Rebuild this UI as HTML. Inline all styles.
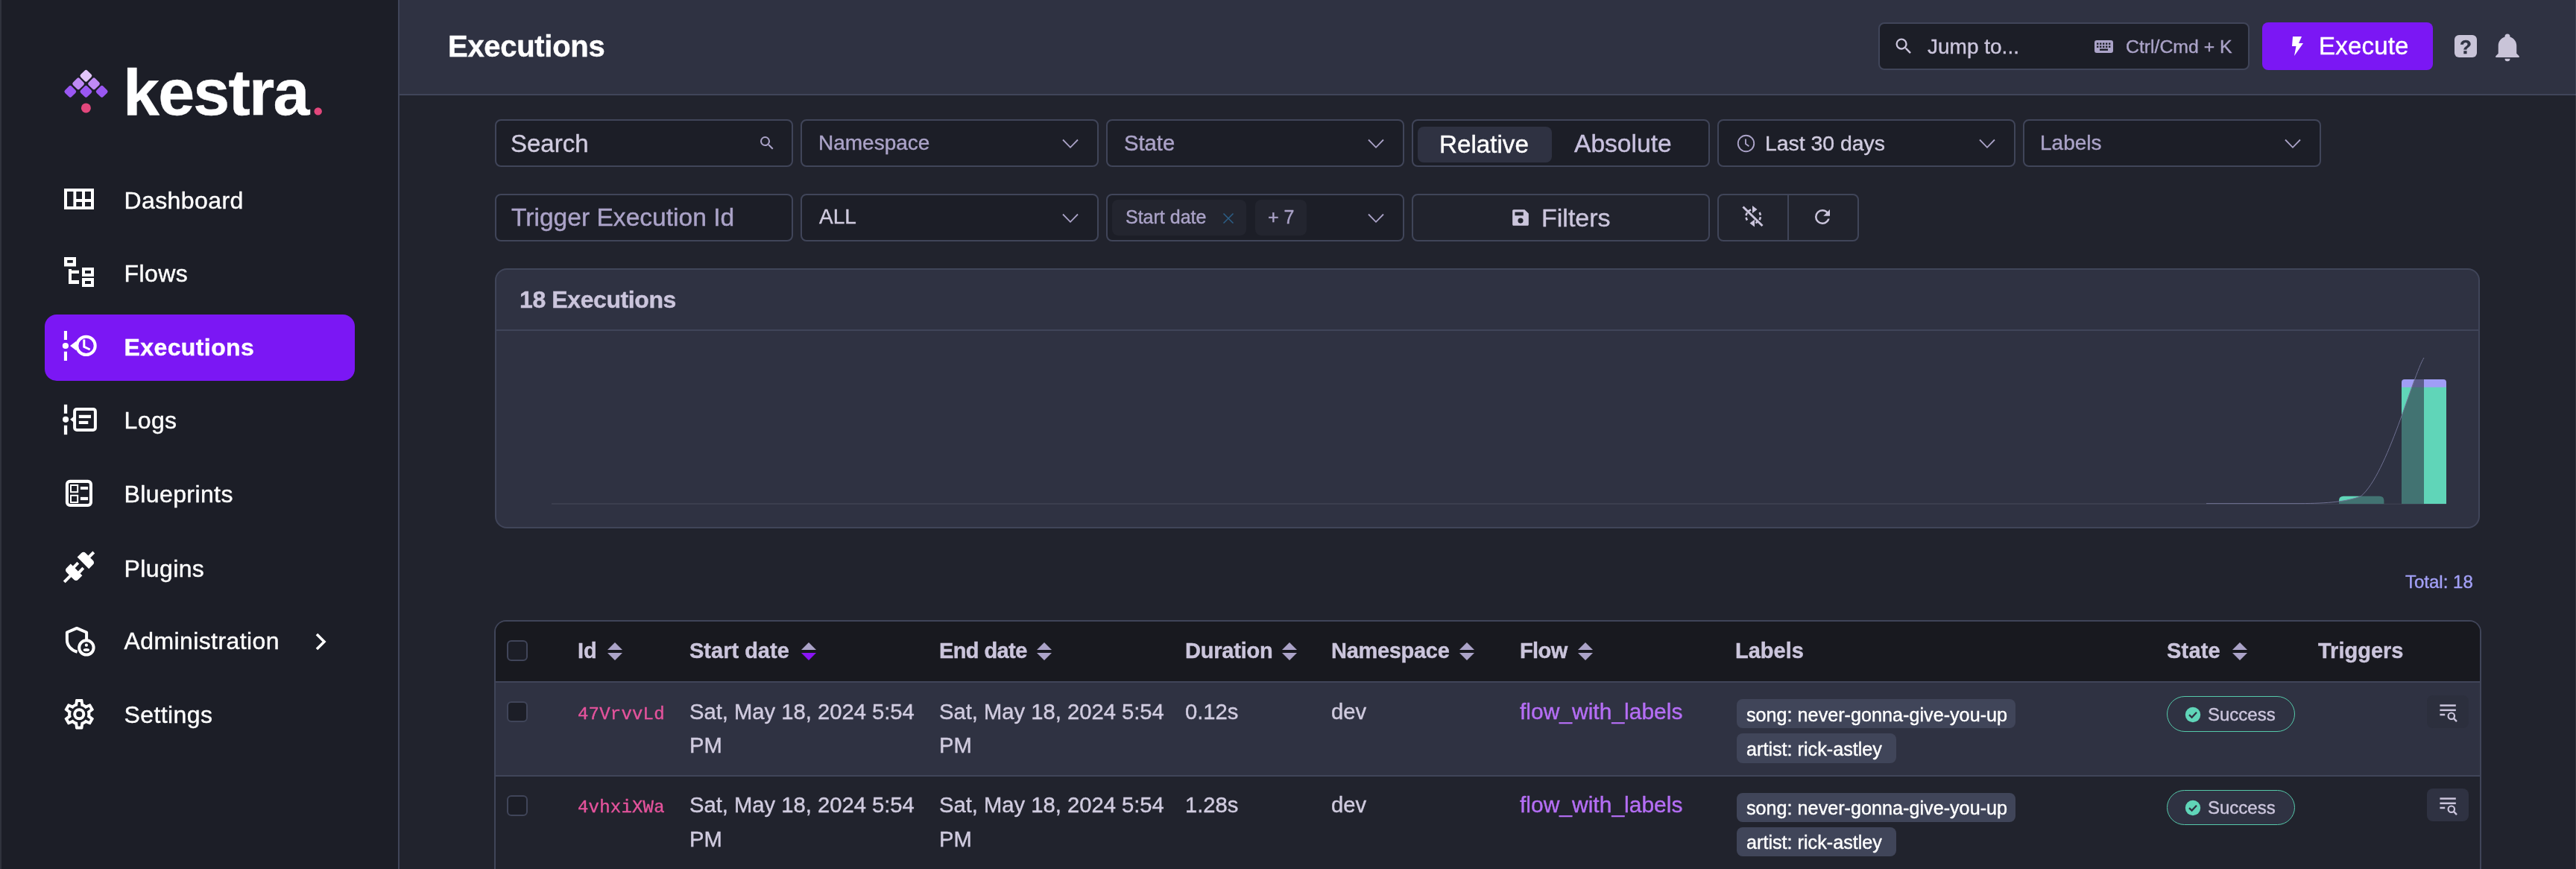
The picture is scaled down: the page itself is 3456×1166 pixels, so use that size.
<!DOCTYPE html>
<html><head><meta charset="utf-8"><title>Executions | Kestra</title>
<style>
html,body{margin:0;padding:0;}
@media (min-width:2400px){html{zoom:2;}}
body{width:1728px;height:583px;overflow:hidden;position:relative;background:#21232d;font-family:'Liberation Sans',sans-serif;}
.t{position:absolute;line-height:1;white-space:nowrap;-webkit-text-stroke:0.2px currentColor;}
.b{position:absolute;}
svg.b{overflow:visible;}
</style></head><body>
<div id="root" style="position:absolute;left:0;top:0;width:1728px;height:583px;will-change:transform">
<div class="b" style="left:0.00px;top:0.00px;width:267.00px;height:583.00px;background:#1c1e27"></div>
<div class="b" style="left:267.00px;top:0.00px;width:1.00px;height:583.00px;background:#404559"></div>
<svg class="b" style="left:0.00px;top:0.00px;width:267.00px;height:100.00px;" viewBox="0 0 534 200"><rect x="109.10000000000001" y="95.4" width="12.6" height="12.6" rx="2.6" fill="#e3c6fb" transform="rotate(45 115.4 101.7)"/><rect x="98.8" y="106.0" width="12.6" height="12.6" rx="2.6" fill="#bf8af5" transform="rotate(45 105.1 112.3)"/><rect x="119.7" y="106.0" width="12.6" height="12.6" rx="2.6" fill="#bf8af5" transform="rotate(45 126 112.3)"/><rect x="88.0" y="116.5" width="12.6" height="12.6" rx="2.6" fill="#9a57f2" transform="rotate(45 94.3 122.8)"/><rect x="109.10000000000001" y="116.5" width="12.6" height="12.6" rx="2.6" fill="#9a57f2" transform="rotate(45 115.4 122.8)"/><rect x="130.39999999999998" y="116.5" width="12.6" height="12.6" rx="2.6" fill="#9a57f2" transform="rotate(45 136.7 122.8)"/><circle cx="115.4" cy="144.9" r="6.5" fill="#e2477c"/><circle cx="426.7" cy="149.4" r="5.2" fill="#e2477c"/></svg>
<div class="t" style="left:82.50px;top:40.00px;font-size:44px;color:#ffffff;font-weight:700;font-family:'Liberation Sans',sans-serif;letter-spacing:-0.9px;">kestra</div>
<div class="b" style="left:30.00px;top:211.00px;width:208.00px;height:44.25px;background:#7b17f4;border-radius:8px"></div>
<div class="t" style="left:83.25px;top:126.45px;font-size:16px;color:#ffffff;font-weight:400;font-family:'Liberation Sans',sans-serif;letter-spacing:0.2px;">Dashboard</div>
<div class="t" style="left:83.25px;top:175.60px;font-size:16px;color:#ffffff;font-weight:400;font-family:'Liberation Sans',sans-serif;letter-spacing:0.2px;">Flows</div>
<div class="t" style="left:83.25px;top:224.90px;font-size:16px;color:#ffffff;font-weight:700;font-family:'Liberation Sans',sans-serif;letter-spacing:0.2px;">Executions</div>
<div class="t" style="left:83.25px;top:274.20px;font-size:16px;color:#ffffff;font-weight:400;font-family:'Liberation Sans',sans-serif;letter-spacing:0.2px;">Logs</div>
<div class="t" style="left:83.25px;top:323.50px;font-size:16px;color:#ffffff;font-weight:400;font-family:'Liberation Sans',sans-serif;letter-spacing:0.2px;">Blueprints</div>
<div class="t" style="left:83.25px;top:373.35px;font-size:16px;color:#ffffff;font-weight:400;font-family:'Liberation Sans',sans-serif;letter-spacing:0.2px;">Plugins</div>
<div class="t" style="left:83.25px;top:422.20px;font-size:16px;color:#ffffff;font-weight:400;font-family:'Liberation Sans',sans-serif;letter-spacing:0.2px;">Administration</div>
<div class="t" style="left:83.25px;top:471.65px;font-size:16px;color:#ffffff;font-weight:400;font-family:'Liberation Sans',sans-serif;letter-spacing:0.2px;">Settings</div>
<svg class="b" style="left:210.00px;top:424.00px;width:11.00px;height:13.00px;" viewBox="0 0 22 26"><path d="M5 3 L15 13 L5 23" fill="none" stroke="#fff" stroke-width="3.6"/></svg>
<svg class="b" style="left:43.00px;top:126.45px;width:20.00px;height:14.05px;" viewBox="0 0 40 28"><path fill-rule="evenodd" fill="#ffffff" d="M0 0H40V28H0Z M4 4H12.4V24H4Z M16.3 4H24V14H16.3Z M16.3 18H24V24H16.3Z M28 4H36V14H28Z M28 18H36V24H28Z"/></svg>
<svg class="b" style="left:43.00px;top:172.50px;width:20.00px;height:20.00px;" viewBox="0 0 40 40"><path fill-rule="evenodd" fill="#ffffff" d="M0 0H16V12.4H0Z M4.2 4H11.8V7.8H4.2Z M24 14H40V26H24Z M28 18H36V22H28Z M24 28H40V40H24Z M28 32H36V36H28Z"/><path fill="#ffffff" d="M6 16H10V17.8H20V21.9H10V31H20V36H6Z"/></svg>
<svg class="b" style="left:40.00px;top:220.00px;width:25.00px;height:25.00px;" viewBox="0 0 50 50"><rect x="5.9" y="4" width="4.1" height="12" fill="#ffffff"/><circle cx="7.9" cy="24" r="4.1" fill="#ffffff"/><rect x="5.9" y="31.7" width="4.1" height="12.3" fill="#ffffff"/><path d="M14 24 L19.5 19.5 A14 14 0 1 1 19.5 28.5 Z" fill="none" stroke="#ffffff" stroke-width="0"/><circle cx="35.5" cy="23.9" r="12.2" fill="none" stroke="#ffffff" stroke-width="4"/><path d="M14 24 L22.5 17.5 L22.5 30.5Z" fill="#ffffff"/><path d="M32.8 15.6 V25.3 L40.7 29" fill="none" stroke="#ffffff" stroke-width="3"/></svg>
<svg class="b" style="left:40.00px;top:270.00px;width:26.00px;height:23.00px;" viewBox="0 0 52 46"><rect x="5.9" y="2.8" width="4.3" height="12.1" fill="#ffffff"/><circle cx="8.1" cy="22.8" r="4.1" fill="#ffffff"/><rect x="5.9" y="30.7" width="4.3" height="12.5" fill="#ffffff"/><rect x="20.1" y="8.9" width="27.8" height="28" rx="3" fill="none" stroke="#ffffff" stroke-width="4"/><path d="M14.1 22.8 L20.5 17.5 L20.5 28.1Z" fill="#ffffff"/><rect x="25.8" y="16.8" width="16.2" height="4.3" fill="#ffffff"/><rect x="25.8" y="24.9" width="12.5" height="4.1" fill="#ffffff"/></svg>
<svg class="b" style="left:40.00px;top:320.00px;width:25.00px;height:23.00px;" viewBox="0 0 50 46"><rect x="9.95" y="5.85" width="32" height="32.2" rx="4" fill="none" stroke="#ffffff" stroke-width="4.1"/><rect x="15" y="11" width="9.2" height="9.2" fill="none" stroke="#ffffff" stroke-width="2"/><rect x="15" y="24.8" width="9.2" height="9.2" fill="none" stroke="#ffffff" stroke-width="2"/><rect x="27.9" y="13" width="10.2" height="3.9" fill="#ffffff"/><rect x="27.9" y="26.9" width="10.2" height="4.2" fill="#ffffff"/></svg>
<svg class="b" style="left:40.90px;top:368.30px;width:24.00px;height:24.00px;" viewBox="0 0 24 24"><path fill="#ffffff" d="M21.4 7.5C22.2 8.3 22.2 9.6 21.4 10.3L18.6 13.1L10.8 5.3L13.6 2.5C14.4 1.7 15.7 1.7 16.4 2.5L18.2 4.3L21.2 1.3L22.6 2.7L19.6 5.7L21.4 7.5M15.6 13.3L14.2 11.9L11.4 14.7L9.3 12.6L12.1 9.8L10.7 8.4L7.9 11.2L6.4 9.8L3.6 12.6C2.8 13.4 2.8 14.7 3.6 15.4L5.4 17.2L1.4 21.2L2.8 22.6L6.8 18.6L8.6 20.4C9.4 21.2 10.7 21.2 11.4 20.4L14.2 17.6L12.8 16.2L15.6 13.3Z"/></svg>
<svg class="b" style="left:40.00px;top:417.50px;width:25.00px;height:25.00px;" viewBox="0 0 50 50"><path d="M36.1 24 V13.5 L23 7.9 L9.9 13.5 V23.5 C9.9 31 15 37.5 23.6 39.7" fill="none" stroke="#ffffff" stroke-width="4" stroke-linejoin="round"/><circle cx="35.9" cy="33.9" r="9.7" fill="#1c1e27" stroke="#ffffff" stroke-width="4"/><circle cx="35.9" cy="30.7" r="2.1" fill="#ffffff"/><ellipse cx="35.9" cy="37" rx="4.2" ry="2.1" fill="#ffffff"/></svg>
<svg class="b" style="left:40.95px;top:466.90px;width:24.25px;height:24.25px;" viewBox="0 0 24 24"><path fill="#ffffff" d="M12,8A4,4 0 0,1 16,12A4,4 0 0,1 12,16A4,4 0 0,1 8,12A4,4 0 0,1 12,8M12,10A2,2 0 0,0 10,12A2,2 0 0,0 12,14A2,2 0 0,0 14,12A2,2 0 0,0 12,10M10,22C9.75,22 9.54,21.82 9.5,21.58L9.13,18.93C8.5,18.68 7.96,18.34 7.44,17.94L4.95,18.95C4.73,19.03 4.46,18.95 4.34,18.73L2.34,15.27C2.21,15.05 2.27,14.78 2.46,14.63L4.57,12.97L4.5,12L4.57,11L2.46,9.37C2.27,9.22 2.21,8.95 2.34,8.73L4.34,5.27C4.46,5.05 4.73,4.96 4.95,5.05L7.44,6.05C7.96,5.66 8.5,5.32 9.13,5.07L9.5,2.42C9.54,2.18 9.75,2 10,2H14C14.25,2 14.46,2.18 14.5,2.42L14.87,5.07C15.5,5.32 16.04,5.66 16.56,6.05L19.05,5.05C19.27,4.96 19.54,5.05 19.66,5.27L21.66,8.73C21.79,8.95 21.73,9.22 21.54,9.37L19.43,11L19.5,12L19.43,13L21.54,14.63C21.73,14.78 21.79,15.05 21.66,15.27L19.66,18.73C19.54,18.95 19.27,19.04 19.05,18.95L16.56,17.95C16.04,18.34 15.5,18.68 14.87,18.93L14.5,21.58C14.46,21.82 14.25,22 14,22H10M11.25,4L10.88,6.61C9.68,6.86 8.62,7.5 7.85,8.39L5.44,7.35L4.69,8.65L6.8,10.2C6.4,11.37 6.4,12.64 6.8,13.8L4.68,15.36L5.43,16.66L7.86,15.62C8.63,16.5 9.68,17.14 10.87,17.38L11.24,20H12.76L13.13,17.39C14.32,17.14 15.37,16.5 16.14,15.62L18.57,16.66L19.32,15.36L17.2,13.81C17.6,12.64 17.6,11.37 17.2,10.2L19.31,8.65L18.56,7.35L16.15,8.39C15.38,7.5 14.32,6.86 13.12,6.62L12.75,4H11.25Z"/></svg>
<div class="b" style="left:0.00px;top:0.00px;width:0.75px;height:583.00px;background:#30333d"></div>
<div class="b" style="left:268.00px;top:0.00px;width:1460.00px;height:63.00px;background:#2f3242"></div>
<div class="b" style="left:268.00px;top:63.00px;width:1460.00px;height:1.00px;background:#404559"></div>
<div class="t" style="left:300.50px;top:21.12px;font-size:20px;color:#ffffff;font-weight:700;font-family:'Liberation Sans',sans-serif;letter-spacing:-0.15px;">Executions</div>
<div class="b" style="left:1260.00px;top:15.00px;width:249.00px;height:31.75px;background:#1c1e27;border:1px solid #404559;border-radius:4px;box-sizing:border-box"></div>
<svg class="b" style="left:1270.00px;top:24.00px;width:14.00px;height:14.00px;" viewBox="0 0 24 24"><path fill="#cbc5dc" d="M9.5,3A6.5,6.5 0 0,1 16,9.5C16,11.11 15.41,12.59 14.44,13.73L14.71,14H15.5L20.5,19L19,20.5L14,15.5V14.71L13.73,14.44C12.59,15.41 11.11,16 9.5,16A6.5,6.5 0 0,1 3,9.5A6.5,6.5 0 0,1 9.5,3M9.5,5C7,5 5,7 5,9.5C5,12 7,14 9.5,14C12,14 14,12 14,9.5C14,7 12,5 9.5,5Z"/></svg>
<div class="t" style="left:1293.00px;top:24.25px;font-size:14px;color:#cbc5dc;font-weight:400;font-family:'Liberation Sans',sans-serif;letter-spacing:0px;">Jump to...</div>
<svg class="b" style="left:1405.00px;top:26.75px;width:12.50px;height:8.50px;" viewBox="0 0 25 17"><rect x="0" y="0" width="25" height="17" rx="3" fill="#aba3c8"/><rect x="3" y="3.5" width="2.4" height="2.4" fill="#1c1e27"/><rect x="3" y="7.5" width="2.4" height="2.4" fill="#1c1e27"/><rect x="7" y="3.5" width="2.4" height="2.4" fill="#1c1e27"/><rect x="7" y="7.5" width="2.4" height="2.4" fill="#1c1e27"/><rect x="11" y="3.5" width="2.4" height="2.4" fill="#1c1e27"/><rect x="11" y="7.5" width="2.4" height="2.4" fill="#1c1e27"/><rect x="15" y="3.5" width="2.4" height="2.4" fill="#1c1e27"/><rect x="15" y="7.5" width="2.4" height="2.4" fill="#1c1e27"/><rect x="19" y="3.5" width="2.4" height="2.4" fill="#1c1e27"/><rect x="19" y="7.5" width="2.4" height="2.4" fill="#1c1e27"/><rect x="7" y="11.5" width="11" height="2.4" fill="#1c1e27"/></svg>
<div class="t" style="left:1426.00px;top:25.25px;font-size:12.4px;color:#aba3c8;font-weight:400;font-family:'Liberation Sans',sans-serif;letter-spacing:0px;">Ctrl/Cmd + K</div>
<div class="b" style="left:1517.50px;top:15.00px;width:114.50px;height:32.00px;background:#7b17f4;border-radius:4px"></div>
<svg class="b" style="left:1536.50px;top:24.00px;width:10.00px;height:14.00px;" viewBox="0 0 20 28"><path fill="#fff" d="M3 1 H15 L11 10 H17 L5 27 L7.5 14 H2 Z"/></svg>
<div class="t" style="left:1555.50px;top:22.43px;font-size:16.5px;color:#ffffff;font-weight:400;font-family:'Liberation Sans',sans-serif;letter-spacing:0.1px;">Execute</div>
<div class="b" style="left:1646.50px;top:23.35px;width:15.00px;height:15.20px;background:#c9c4d8;border-radius:3px"></div>
<div class="t" style="left:1649.00px;top:25.24px;font-size:13px;color:#2f3242;font-weight:700;font-family:'Liberation Sans',sans-serif;letter-spacing:0px;width:10px;text-align:center;">?</div>
<svg class="b" style="left:1671.50px;top:21.00px;width:21.00px;height:21.00px;" viewBox="0 0 24 24"><path fill="#c9c4d8" d="M21,19V20H3V19L5,17V11C5,7.9 7.03,5.17 10,4.29C10,4.19 10,4.1 10,4A2,2 0 0,1 12,2A2,2 0 0,1 14,4C14,4.1 14,4.19 14,4.29C16.97,5.17 19,7.9 19,11V17L21,19M14,21A2,2 0 0,1 12,23A2,2 0 0,1 10,21"/></svg>
<div class="b" style="left:332.00px;top:80.00px;width:199.75px;height:32.00px;background:#1c1e27;border:1px solid #404559;border-radius:4px;box-sizing:border-box"></div>
<div class="b" style="left:537.00px;top:80.00px;width:199.75px;height:32.00px;background:#1c1e27;border:1px solid #404559;border-radius:4px;box-sizing:border-box"></div>
<div class="b" style="left:742.00px;top:80.00px;width:199.75px;height:32.00px;background:#1c1e27;border:1px solid #404559;border-radius:4px;box-sizing:border-box"></div>
<div class="b" style="left:947.00px;top:80.00px;width:199.75px;height:32.00px;background:#1c1e27;border:1px solid #404559;border-radius:4px;box-sizing:border-box"></div>
<div class="b" style="left:1152.00px;top:80.00px;width:199.75px;height:32.00px;background:#1c1e27;border:1px solid #404559;border-radius:4px;box-sizing:border-box"></div>
<div class="b" style="left:1357.00px;top:80.00px;width:199.75px;height:32.00px;background:#1c1e27;border:1px solid #404559;border-radius:4px;box-sizing:border-box"></div>
<div class="t" style="left:342.50px;top:87.78px;font-size:16.5px;color:#d0cbdf;font-weight:400;font-family:'Liberation Sans',sans-serif;letter-spacing:0px;">Search</div>
<svg class="b" style="left:508.50px;top:90.00px;width:12.00px;height:12.00px;" viewBox="0 0 24 24"><path fill="#aba3c8" d="M9.5,3A6.5,6.5 0 0,1 16,9.5C16,11.11 15.41,12.59 14.44,13.73L14.71,14H15.5L20.5,19L19,20.5L14,15.5V14.71L13.73,14.44C12.59,15.41 11.11,16 9.5,16A6.5,6.5 0 0,1 3,9.5A6.5,6.5 0 0,1 9.5,3M9.5,5C7,5 5,7 5,9.5C5,12 7,14 9.5,14C12,14 14,12 14,9.5C14,7 12,5 9.5,5Z"/></svg>
<div class="t" style="left:549.00px;top:89.05px;font-size:14px;color:#aba3c8;font-weight:400;font-family:'Liberation Sans',sans-serif;letter-spacing:0px;">Namespace</div>
<svg class="b" style="left:712.00px;top:92.25px;width:12.00px;height:7.00px;" viewBox="0 0 24 14"><path d="M2 2.5 L12 12.8 L22 2.5" fill="none" stroke="#aba3c8" stroke-width="1.8"/></svg>
<div class="t" style="left:754.00px;top:88.94px;font-size:14.6px;color:#aba3c8;font-weight:400;font-family:'Liberation Sans',sans-serif;letter-spacing:0px;">State</div>
<svg class="b" style="left:917.00px;top:92.25px;width:12.00px;height:7.00px;" viewBox="0 0 24 14"><path d="M2 2.5 L12 12.8 L22 2.5" fill="none" stroke="#aba3c8" stroke-width="1.8"/></svg>
<div class="b" style="left:951.00px;top:85.15px;width:89.75px;height:24.00px;background:#2f3242;border-radius:4px"></div>
<div class="t" style="left:965.50px;top:88.39px;font-size:16.6px;color:#ffffff;font-weight:400;font-family:'Liberation Sans',sans-serif;letter-spacing:0px;">Relative</div>
<div class="t" style="left:1056.00px;top:88.23px;font-size:16.8px;color:#c8c1de;font-weight:400;font-family:'Liberation Sans',sans-serif;letter-spacing:0px;">Absolute</div>
<svg class="b" style="left:1164.75px;top:89.75px;width:12.50px;height:12.50px;" viewBox="0 0 24 24"><circle cx="12" cy="12" r="10.3" fill="none" stroke="#aba3c8" stroke-width="1.8"/><path d="M11.5 6.2 V12.6 L15.8 15.6" fill="none" stroke="#aba3c8" stroke-width="1.8"/></svg>
<div class="t" style="left:1184.00px;top:88.88px;font-size:14.2px;color:#d0cbdf;font-weight:400;font-family:'Liberation Sans',sans-serif;letter-spacing:0px;">Last 30 days</div>
<svg class="b" style="left:1327.00px;top:92.25px;width:12.00px;height:7.00px;" viewBox="0 0 24 14"><path d="M2 2.5 L12 12.8 L22 2.5" fill="none" stroke="#aba3c8" stroke-width="1.8"/></svg>
<div class="t" style="left:1368.50px;top:89.05px;font-size:14px;color:#aba3c8;font-weight:400;font-family:'Liberation Sans',sans-serif;letter-spacing:0px;">Labels</div>
<svg class="b" style="left:1532.00px;top:92.25px;width:12.00px;height:7.00px;" viewBox="0 0 24 14"><path d="M2 2.5 L12 12.8 L22 2.5" fill="none" stroke="#aba3c8" stroke-width="1.8"/></svg>
<div class="b" style="left:332.00px;top:130.00px;width:199.75px;height:32.00px;background:#1c1e27;border:1px solid #404559;border-radius:4px;box-sizing:border-box"></div>
<div class="b" style="left:537.00px;top:130.00px;width:199.75px;height:32.00px;background:#1c1e27;border:1px solid #404559;border-radius:4px;box-sizing:border-box"></div>
<div class="b" style="left:742.00px;top:130.00px;width:199.75px;height:32.00px;background:#1c1e27;border:1px solid #404559;border-radius:4px;box-sizing:border-box"></div>
<div class="b" style="left:947.00px;top:130.00px;width:199.75px;height:32.00px;border:1px solid #404559;border-radius:4px;box-sizing:border-box"></div>
<div class="b" style="left:1152.00px;top:130.00px;width:95.00px;height:32.00px;border:1px solid #404559;border-radius:4px;box-sizing:border-box"></div>
<div class="b" style="left:1199.00px;top:130.50px;width:1.00px;height:31.00px;background:#404559"></div>
<div class="t" style="left:343.00px;top:137.63px;font-size:16.8px;color:#aba3c8;font-weight:400;font-family:'Liberation Sans',sans-serif;letter-spacing:0px;">Trigger Execution Id</div>
<div class="t" style="left:549.50px;top:138.40px;font-size:14px;color:#d0cbdf;font-weight:400;font-family:'Liberation Sans',sans-serif;letter-spacing:0px;">ALL</div>
<svg class="b" style="left:712.00px;top:142.25px;width:12.00px;height:7.00px;" viewBox="0 0 24 14"><path d="M2 2.5 L12 12.8 L22 2.5" fill="none" stroke="#aba3c8" stroke-width="1.8"/></svg>
<div class="b" style="left:746.00px;top:134.20px;width:90.00px;height:23.60px;background:#23252f;border-radius:4px"></div>
<div class="t" style="left:755.00px;top:139.67px;font-size:12.5px;color:#aba3c8;font-weight:400;font-family:'Liberation Sans',sans-serif;letter-spacing:0px;">Start date</div>
<svg class="b" style="left:820.00px;top:142.25px;width:8.00px;height:8.00px;" viewBox="0 0 16 16"><path d="M1.5 1.5 L14.5 14.5 M14.5 1.5 L1.5 14.5" stroke="#2c5e86" stroke-width="1.5"/></svg>
<div class="b" style="left:842.00px;top:134.20px;width:34.25px;height:23.60px;background:#23252f;border-radius:4px"></div>
<div class="t" style="left:850.50px;top:139.67px;font-size:12.5px;color:#aba3c8;font-weight:400;font-family:'Liberation Sans',sans-serif;letter-spacing:0px;">+ 7</div>
<svg class="b" style="left:917.00px;top:142.25px;width:12.00px;height:7.00px;" viewBox="0 0 24 14"><path d="M2 2.5 L12 12.8 L22 2.5" fill="none" stroke="#aba3c8" stroke-width="1.8"/></svg>
<svg class="b" style="left:1013.50px;top:139.25px;width:13.00px;height:13.00px;" viewBox="0 0 24 24"><path fill="#cbc5dc" d="M2 3.5 C2 2.7 2.7 2 3.5 2 H17 L22 7 V20.5 C22 21.3 21.3 22 20.5 22 H3.5 C2.7 22 2 21.3 2 20.5Z M5 5 V9.5 H15.5 V5Z M12 12.5 A3.3 3.3 0 1 0 12 19.1 A3.3 3.3 0 1 0 12 12.5Z"/></svg>
<div class="t" style="left:1034.00px;top:137.36px;font-size:17px;color:#cbc5dc;font-weight:400;font-family:'Liberation Sans',sans-serif;letter-spacing:0px;">Filters</div>
<svg class="b" style="left:1165.00px;top:135.00px;width:20.00px;height:20.00px;" viewBox="2330 270 40 40"><g fill="none" stroke="#cbc5dc" stroke-width="2.6"><path d="M2344 295.5 A9.5 9.5 0 0 1 2351 281" stroke-dasharray="4 2.5"/><path d="M2360.5 285 A9.5 9.5 0 0 1 2353 299.5" stroke-dasharray="4 2.5"/></g><path d="M2338.5 277.5 L2364.5 303" stroke="#cbc5dc" stroke-width="3"/><path d="M2351 276 L2357.5 281 L2351 286Z M2354 294.5 L2347.5 299.5 L2354 304.5Z" fill="#cbc5dc"/></svg>
<svg class="b" style="left:1215.00px;top:138.00px;width:15.00px;height:15.00px;" viewBox="0 0 24 24"><path fill="#cbc5dc" d="M17.65,6.35C16.2,4.9 14.21,4 12,4A8,8 0 0,0 4,12A8,8 0 0,0 12,20C15.73,20 18.84,17.45 19.73,14H17.65C16.83,16.33 14.61,18 12,18A6,6 0 0,1 6,12A6,6 0 0,1 12,6C13.66,6 15.14,6.69 16.22,7.78L13,11H20V4L17.65,6.35Z"/></svg>
<div class="b" style="left:332.00px;top:180.00px;width:1331.50px;height:174.50px;background:#2f3242;border:1px solid #404559;border-radius:8px;box-sizing:border-box"></div>
<div class="b" style="left:333.00px;top:221.00px;width:1329.50px;height:1.00px;background:#404559"></div>
<div class="t" style="left:348.50px;top:193.05px;font-size:16px;color:#cbc5dc;font-weight:700;font-family:'Liberation Sans',sans-serif;letter-spacing:-0.2px;">18 Executions</div>
<div class="b" style="left:370.00px;top:337.25px;width:1271.00px;height:1.00px;background:#3b3e4e"></div>
<svg class="b" style="left:0.00px;top:0.00px;width:1728.00px;height:583.00px;" viewBox="0 0 3456 1166"><path d="M3138 676 V671.8 Q3138 665.8 3144 665.8 H3192.4 Q3198.4 665.8 3198.4 671.8 V676Z" fill="#60d5b8"/>
<path d="M3222 513 Q3222 509 3226 509 H3278 Q3282 509 3282 513 V676 H3222Z" fill="#a09ef6"/>
<rect x="3222" y="519.6" width="60" height="156.4" fill="#60d5b8"/>
<path d="M2960 675.6 L3085 675.6 C3125 675.5 3148 673 3167.5 665.8 C3203 636 3237 504 3252 480 V676 H2960Z" fill="rgba(47,50,66,0.6)"/>
<path d="M2960 675.6 L3085 675.6 C3125 675.5 3148 673 3167.5 665.8 C3203 636 3237 504 3252 480" fill="none" stroke="#6f7192" stroke-width="1"/></svg>
<div class="t" style="left:1613.50px;top:384.34px;font-size:12px;color:#a3a0f7;font-weight:400;font-family:'Liberation Sans',sans-serif;letter-spacing:0px;">Total: 18</div>
<div class="b" style="left:331.25px;top:416.2px;width:1333px;height:200px;border:1px solid #404559;border-bottom:none;border-radius:8px 8px 0 0;overflow:hidden;box-sizing:border-box;background:#21232d">
<div class="b" style="left:0;top:0;right:0;height:39.8px;background:#18191f"></div>
<div class="b" style="left:0;top:39.8px;right:0;height:1px;background:#404559"></div>
<div class="b" style="left:0;top:40.8px;right:0;height:62.1px;background:#2f3242"></div>
<div class="b" style="left:0;top:102.9px;right:0;height:1px;background:#404559"></div>
</div>
<div class="b" style="left:340.00px;top:429.50px;width:14.00px;height:14.00px;background:#1c1e27;border:1px solid #404559;border-radius:3px;box-sizing:border-box"></div>
<div class="b" style="left:340.00px;top:470.50px;width:14.00px;height:14.00px;background:#1c1e27;border:1px solid #404559;border-radius:3px;box-sizing:border-box"></div>
<div class="b" style="left:340.00px;top:533.50px;width:14.00px;height:14.00px;background:#1c1e27;border:1px solid #404559;border-radius:3px;box-sizing:border-box"></div>
<div class="t" style="left:387.50px;top:429.57px;font-size:14.5px;color:#cbc5dc;font-weight:700;font-family:'Liberation Sans',sans-serif;letter-spacing:0px;">Id</div>
<svg class="b" style="left:407.00px;top:430.50px;width:11.00px;height:13.00px;" viewBox="0 0 22 26"><path d="M11 1 L21 11 H1Z" fill="#aba3c8"/><path d="M11 25 L21 15 H1Z" fill="#aba3c8"/></svg>
<div class="t" style="left:462.50px;top:429.57px;font-size:14.5px;color:#cbc5dc;font-weight:700;font-family:'Liberation Sans',sans-serif;letter-spacing:0px;">Start date</div>
<svg class="b" style="left:537.00px;top:430.50px;width:11.00px;height:13.00px;" viewBox="0 0 22 26"><path d="M11 1 L21 11 H1Z" fill="#aba3c8"/><path d="M11 25 L21 15 H1Z" fill="#8a14f5"/></svg>
<div class="t" style="left:630.00px;top:429.57px;font-size:14.5px;color:#cbc5dc;font-weight:700;font-family:'Liberation Sans',sans-serif;letter-spacing:-0.3px;">End date</div>
<svg class="b" style="left:695.00px;top:430.50px;width:11.00px;height:13.00px;" viewBox="0 0 22 26"><path d="M11 1 L21 11 H1Z" fill="#aba3c8"/><path d="M11 25 L21 15 H1Z" fill="#aba3c8"/></svg>
<div class="t" style="left:795.00px;top:429.57px;font-size:14.5px;color:#cbc5dc;font-weight:700;font-family:'Liberation Sans',sans-serif;letter-spacing:-0.1px;">Duration</div>
<svg class="b" style="left:859.50px;top:430.50px;width:11.00px;height:13.00px;" viewBox="0 0 22 26"><path d="M11 1 L21 11 H1Z" fill="#aba3c8"/><path d="M11 25 L21 15 H1Z" fill="#aba3c8"/></svg>
<div class="t" style="left:893.00px;top:429.57px;font-size:14.5px;color:#cbc5dc;font-weight:700;font-family:'Liberation Sans',sans-serif;letter-spacing:-0.15px;">Namespace</div>
<svg class="b" style="left:978.50px;top:430.50px;width:11.00px;height:13.00px;" viewBox="0 0 22 26"><path d="M11 1 L21 11 H1Z" fill="#aba3c8"/><path d="M11 25 L21 15 H1Z" fill="#aba3c8"/></svg>
<div class="t" style="left:1019.50px;top:429.57px;font-size:14.5px;color:#cbc5dc;font-weight:700;font-family:'Liberation Sans',sans-serif;letter-spacing:-0.3px;">Flow</div>
<svg class="b" style="left:1058.00px;top:430.50px;width:11.00px;height:13.00px;" viewBox="0 0 22 26"><path d="M11 1 L21 11 H1Z" fill="#aba3c8"/><path d="M11 25 L21 15 H1Z" fill="#aba3c8"/></svg>
<div class="t" style="left:1164.00px;top:429.57px;font-size:14.5px;color:#cbc5dc;font-weight:700;font-family:'Liberation Sans',sans-serif;letter-spacing:0px;">Labels</div>
<div class="t" style="left:1453.50px;top:429.57px;font-size:14.5px;color:#cbc5dc;font-weight:700;font-family:'Liberation Sans',sans-serif;letter-spacing:0.1px;">State</div>
<svg class="b" style="left:1497.00px;top:430.50px;width:11.00px;height:13.00px;" viewBox="0 0 22 26"><path d="M11 1 L21 11 H1Z" fill="#aba3c8"/><path d="M11 25 L21 15 H1Z" fill="#aba3c8"/></svg>
<div class="t" style="left:1555.00px;top:429.57px;font-size:14.5px;color:#cbc5dc;font-weight:700;font-family:'Liberation Sans',sans-serif;letter-spacing:0px;">Triggers</div>
<div class="t" style="left:387.50px;top:473.49px;font-size:12px;color:#e4539c;font-weight:400;font-family:'Liberation Mono',monospace;letter-spacing:0.1px;">47VrvvLd</div>
<div class="t" style="left:462.50px;top:470.29px;font-size:14.6px;color:#d0cbdf;font-weight:400;font-family:'Liberation Sans',sans-serif;letter-spacing:0px;">Sat, May 18, 2024 5:54</div>
<div class="t" style="left:462.50px;top:493.14px;font-size:14.6px;color:#d0cbdf;font-weight:400;font-family:'Liberation Sans',sans-serif;letter-spacing:0px;">PM</div>
<div class="t" style="left:630.00px;top:470.29px;font-size:14.6px;color:#d0cbdf;font-weight:400;font-family:'Liberation Sans',sans-serif;letter-spacing:0px;">Sat, May 18, 2024 5:54</div>
<div class="t" style="left:630.00px;top:493.14px;font-size:14.6px;color:#d0cbdf;font-weight:400;font-family:'Liberation Sans',sans-serif;letter-spacing:0px;">PM</div>
<div class="t" style="left:795.00px;top:470.29px;font-size:14.6px;color:#d0cbdf;font-weight:400;font-family:'Liberation Sans',sans-serif;letter-spacing:0px;">0.12s</div>
<div class="t" style="left:893.00px;top:470.29px;font-size:14.6px;color:#d0cbdf;font-weight:400;font-family:'Liberation Sans',sans-serif;letter-spacing:0px;">dev</div>
<div class="t" style="left:1019.50px;top:469.95px;font-size:15px;color:#b56ef5;font-weight:400;font-family:'Liberation Sans',sans-serif;letter-spacing:0px;">flow_with_labels</div>
<div class="b" style="left:1164.75px;top:469.10px;width:187.05px;height:19.50px;background:#404559;border-radius:4px"></div>
<div class="t" style="left:1171.50px;top:473.43px;font-size:12.6px;color:#ffffff;font-weight:400;font-family:'Liberation Sans',sans-serif;letter-spacing:0px;">song: never-gonna-give-you-up</div>
<div class="b" style="left:1164.75px;top:492.20px;width:107.25px;height:19.70px;background:#404559;border-radius:4px"></div>
<div class="t" style="left:1171.50px;top:496.53px;font-size:12.6px;color:#ffffff;font-weight:400;font-family:'Liberation Sans',sans-serif;letter-spacing:0px;">artist: rick-astley</div>
<div class="b" style="left:1453.50px;top:467.15px;width:86.00px;height:23.85px;background:#2f3242;border:0.75px solid #55c9aa;border-radius:24px;box-sizing:border-box"></div>
<svg class="b" style="left:1465.50px;top:473.90px;width:11.00px;height:11.00px;" viewBox="0 0 22 22"><circle cx="11" cy="11" r="10.2" fill="#60d5b8"/><path d="M6 11.2 L9.6 14.6 L16 7.8" fill="none" stroke="#2f3242" stroke-width="2.3"/></svg>
<div class="t" style="left:1481.00px;top:473.49px;font-size:12px;color:#cbc5dc;font-weight:400;font-family:'Liberation Sans',sans-serif;letter-spacing:0px;">Success</div>
<div class="b" style="left:1628.00px;top:466.35px;width:28.00px;height:22.00px;background:#2c2f3d;border-radius:4px"></div>
<svg class="b" style="left:1628.00px;top:466.35px;width:28.00px;height:22.00px;" viewBox="3256 932.7 56 44"><g fill="#cbc5dc"><rect x="3273.4" y="945" width="21.4" height="2.5"/><rect x="3273.4" y="951.3" width="21.4" height="2.5"/><rect x="3273.4" y="957.4" width="6.8" height="2.5"/></g><circle cx="3288.8" cy="960.4" r="4.2" fill="none" stroke="#cbc5dc" stroke-width="2.2"/><path d="M3291.7 963.4 L3296 967.8" stroke="#cbc5dc" stroke-width="2.4"/></svg>
<div class="t" style="left:387.50px;top:536.19px;font-size:12px;color:#e4539c;font-weight:400;font-family:'Liberation Mono',monospace;letter-spacing:0.1px;">4vhxiXWa</div>
<div class="t" style="left:462.50px;top:532.99px;font-size:14.6px;color:#d0cbdf;font-weight:400;font-family:'Liberation Sans',sans-serif;letter-spacing:0px;">Sat, May 18, 2024 5:54</div>
<div class="t" style="left:462.50px;top:555.89px;font-size:14.6px;color:#d0cbdf;font-weight:400;font-family:'Liberation Sans',sans-serif;letter-spacing:0px;">PM</div>
<div class="t" style="left:630.00px;top:532.99px;font-size:14.6px;color:#d0cbdf;font-weight:400;font-family:'Liberation Sans',sans-serif;letter-spacing:0px;">Sat, May 18, 2024 5:54</div>
<div class="t" style="left:630.00px;top:555.89px;font-size:14.6px;color:#d0cbdf;font-weight:400;font-family:'Liberation Sans',sans-serif;letter-spacing:0px;">PM</div>
<div class="t" style="left:795.00px;top:532.99px;font-size:14.6px;color:#d0cbdf;font-weight:400;font-family:'Liberation Sans',sans-serif;letter-spacing:0px;">1.28s</div>
<div class="t" style="left:893.00px;top:532.99px;font-size:14.6px;color:#d0cbdf;font-weight:400;font-family:'Liberation Sans',sans-serif;letter-spacing:0px;">dev</div>
<div class="t" style="left:1019.50px;top:532.65px;font-size:15px;color:#b56ef5;font-weight:400;font-family:'Liberation Sans',sans-serif;letter-spacing:0px;">flow_with_labels</div>
<div class="b" style="left:1164.75px;top:531.80px;width:187.05px;height:19.50px;background:#404559;border-radius:4px"></div>
<div class="t" style="left:1171.50px;top:536.13px;font-size:12.6px;color:#ffffff;font-weight:400;font-family:'Liberation Sans',sans-serif;letter-spacing:0px;">song: never-gonna-give-you-up</div>
<div class="b" style="left:1164.75px;top:554.90px;width:107.25px;height:19.70px;background:#404559;border-radius:4px"></div>
<div class="t" style="left:1171.50px;top:559.23px;font-size:12.6px;color:#ffffff;font-weight:400;font-family:'Liberation Sans',sans-serif;letter-spacing:0px;">artist: rick-astley</div>
<div class="b" style="left:1453.50px;top:529.80px;width:86.00px;height:23.85px;background:#2f3242;border:0.75px solid #55c9aa;border-radius:24px;box-sizing:border-box"></div>
<svg class="b" style="left:1465.50px;top:536.55px;width:11.00px;height:11.00px;" viewBox="0 0 22 22"><circle cx="11" cy="11" r="10.2" fill="#60d5b8"/><path d="M6 11.2 L9.6 14.6 L16 7.8" fill="none" stroke="#2f3242" stroke-width="2.3"/></svg>
<div class="t" style="left:1481.00px;top:536.14px;font-size:12px;color:#cbc5dc;font-weight:400;font-family:'Liberation Sans',sans-serif;letter-spacing:0px;">Success</div>
<div class="b" style="left:1628.00px;top:529.00px;width:28.00px;height:22.00px;background:#2f3242;border-radius:4px"></div>
<svg class="b" style="left:1628.00px;top:529.00px;width:28.00px;height:22.00px;" viewBox="3256 932.7 56 44"><g fill="#cbc5dc"><rect x="3273.4" y="945" width="21.4" height="2.5"/><rect x="3273.4" y="951.3" width="21.4" height="2.5"/><rect x="3273.4" y="957.4" width="6.8" height="2.5"/></g><circle cx="3288.8" cy="960.4" r="4.2" fill="none" stroke="#cbc5dc" stroke-width="2.2"/><path d="M3291.7 963.4 L3296 967.8" stroke="#cbc5dc" stroke-width="2.4"/></svg>
<div class="b" style="left:1727.25px;top:0.00px;width:0.75px;height:583.00px;background:rgba(255,255,255,0.09)"></div>
</div>
</body></html>
